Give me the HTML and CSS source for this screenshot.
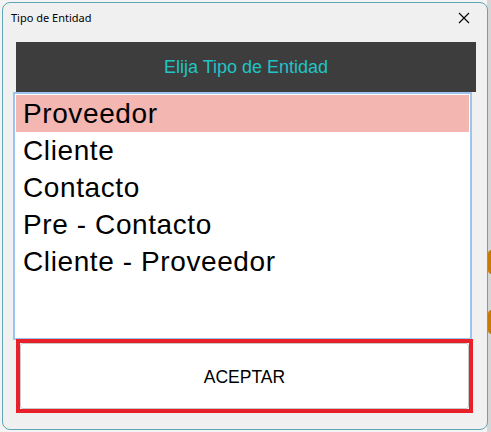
FILE: index.html
```html
<!DOCTYPE html>
<html lang="es">
<head>
    <meta charset="UTF-8">
    <meta name="viewport" content="width=device-width, initial-scale=1.0">
    <title>Tipo de Entidad</title>
    <link rel="stylesheet" href="styles.css">
</head>
<body>
    <div class="behind">
        <span class="blob blob-top"></span>
        <span class="blob blob-bottom"></span>
    </div>

    <div class="window">
        <div class="titleBar">
            <span class="titleText">Tipo de Entidad</span>
            <span class="closeButton">
                <svg width="12" height="12" viewBox="0 0 12 12">
                    <path d="M1 1 L11 11 M11 1 L1 11" stroke="#000" stroke-width="1.1" fill="none"/>
                </svg>
            </span>
        </div>

        <div class="content">
            <div class="header">Elija Tipo de Entidad</div>

            <ul class="listBox">
                <li class="listItem selected">Proveedor</li>
                <li class="listItem">Cliente</li>
                <li class="listItem">Contacto</li>
                <li class="listItem">Pre - Contacto</li>
                <li class="listItem">Cliente - Proveedor</li>
            </ul>

            <div class="buttonFrame">
                <button type="button" class="acceptButton">ACEPTAR</button>
            </div>
        </div>
    </div>
</body>
</html>
```

FILE: styles.css
```css
/* styles.css */
body {
    margin: 0;
    padding: 0;
    background-color: #f3f3f3;
    font-family: 'Liberation Sans', Arial, sans-serif;
    width: 491px;
    height: 432px;
    overflow: hidden;
    position: relative;
}

/* window behind the dialog, only its edge shows */
.behind {
    position: absolute;
    right: 0;
    top: 0;
    width: 4px;
    height: 432px;
    background-color: #d6d6d6;
}

.blob {
    position: absolute;
    left: 1px;
    width: 8px;
    height: 24px;
    border-radius: 4px;
    background-color: #c97a00;
}

.blob-top {
    top: 250px;
}

.blob-bottom {
    top: 310px;
}

.window {
    position: relative;
    margin: 2px;
    width: 486px;
    height: 428px;
    box-sizing: border-box;
    border: 1px solid #5fa7b6;
    border-radius: 8px;
    background-color: #f0f0f0;
}

.titleBar {
    display: flex;
    align-items: center;
    justify-content: space-between;
    height: 29px;
    padding: 0 17px 0 8px;
}

.titleText {
    font-family: 'Noto Sans', sans-serif;
    font-size: 11px;
    color: #000;
}

.closeButton {
    display: flex;
    align-items: center;
}

.content {
    padding: 10px 0 0 10px;
}

.header {
    margin-left: 3px;
    width: 460px;
    height: 50px;
    background-color: #3d3d3d;
    color: #21c4c6;
    font-size: 18px;
    display: flex;
    align-items: center;
    justify-content: center;
}

.listBox {
    list-style: none;
    margin: 0;
    padding: 1px 0 0 1px;
    width: 459px;
    height: 248px;
    box-sizing: border-box;
    border: 2px solid #9dc4ec;
    background-color: #fff;
}

.listItem {
    height: 37px;
    line-height: 37px;
    padding-left: 7px;
    font-size: 28px;
    letter-spacing: 0.6px;
    color: #000;
}

.listItem.selected {
    background-color: #f4b6b1;
    margin-right: 1px;
}

.buttonFrame {
    margin: -1px 0 0 3px;
    width: 457px;
    height: 74px;
    box-sizing: border-box;
    border: 4px solid #e8202a;
    background-color: #fff;
}

.acceptButton {
    width: 100%;
    height: 100%;
    padding-top: 3px;
    border: 1px solid #c9c9c9;
    border-radius: 3px;
    background-color: #fff;
    font-family: 'Liberation Sans', Arial, sans-serif;
    font-size: 17.5px;
    color: #000;
    cursor: pointer;
}
```
